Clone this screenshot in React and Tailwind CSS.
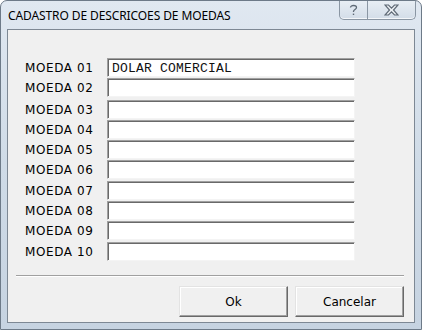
import React from "react";

const rows = [
  { n: "01", v: "DOLAR COMERCIAL", mt: "mt-[28px]" },
  { n: "02", v: "", mt: "mt-[1px]" },
  { n: "03", v: "", mt: "mt-[3px]" },
  { n: "04", v: "", mt: "mt-[1px]" },
  { n: "05", v: "", mt: "mt-[1px]" },
  { n: "06", v: "", mt: "mt-[1px]" },
  { n: "07", v: "", mt: "mt-[2px]" },
  { n: "08", v: "", mt: "mt-[1px]" },
  { n: "09", v: "", mt: "mt-[1px]" },
  { n: "10", v: "", mt: "mt-[2px]" },
];

function Field({ value }) {
  return (
    <div className="w-[248px] h-[19px] shrink-0 bg-white border border-t-[#a0a0a0] border-l-[#a0a0a0] border-b-[#f4f4f4] border-r-[#f4f4f4] shadow-[inset_1px_1px_0_#696969] flex items-center pl-[4px] pt-[1px] font-['Liberation_Mono',monospace] text-[13px] text-[#111] leading-none tracking-[0.2px]">
      {value}
    </div>
  );
}

function Button({ children }) {
  return (
    <button
      type="button"
      className="w-[109px] h-[31px] bg-[#f0f0f0] border border-t-[#e3e3e3] border-l-[#e3e3e3] border-b-[#696969] border-r-[#696969] shadow-[inset_-1px_-1px_0_#a0a0a0,inset_1px_1px_0_#ffffff] font-['DejaVu_Sans',sans-serif] text-[12px] text-black"
    >
      {children}
    </button>
  );
}

export default function App() {
  return (
    <div className="w-[422px] h-[330px] rounded-t-[7px] border border-[#6d7a88] bg-gradient-to-b from-[#e0e8f1] via-[#cfdbe7] to-[#c6d3e1] flex flex-col overflow-hidden">
      {/* Title bar */}
      <div className="h-[28px] flex items-start relative shrink-0">
        <span className="ml-[7px] mt-[6px] font-['Noto_Sans',sans-serif] text-[12px] text-black tracking-[-0.1px]">
          CADASTRO DE DESCRICOES DE MOEDAS
        </span>
        <div className="absolute right-[5px] top-[-1px] flex h-[20px] border border-t-0 border-[#8a96a3] rounded-b-[5px] bg-gradient-to-b from-[#e9eff5] to-[#d3dde8] shadow-[inset_0_-1px_0_#f4f7fa]">
          <div className="w-[28px] flex items-center justify-center border-r border-[#8a96a3]">
            <svg width="9" height="12" viewBox="0 0 9 12" fill="none" stroke="#5f6a76" strokeWidth="1.3">
              <path d="M1.5 3.5 C1.5 0.8 7.5 0.8 7.5 3.5 C7.5 5.5 4.5 5.5 4.5 7.5 V8" />
              <rect x="3.8" y="9.6" width="1.4" height="1.4" fill="#5f6a76" stroke="none" />
            </svg>
          </div>
          <div className="w-[47px] flex items-center justify-center">
            <svg width="15" height="12" viewBox="0 0 15 12" fill="#eef2f6" stroke="#5f6a76" strokeWidth="1.2">
              <path d="M1 1 H4.5 L7.5 4.2 L10.5 1 H14 L9.5 6 L14 11 H10.5 L7.5 7.8 L4.5 11 H1 L5.5 6 Z" />
            </svg>
          </div>
        </div>
      </div>

      {/* Client area */}
      <div className="mx-[6px] mb-[6px] flex-1 border border-[#7d8894] bg-[#f0f0f0] flex flex-col">
        <div className="flex flex-col">
          {rows.map((r) => (
            <div key={r.n} className={`flex items-center ${r.mt}`}>
              <span className="w-[99px] shrink-0 pl-[17px] font-['DejaVu_Sans',sans-serif] text-[12px] tracking-[0.6px] text-black leading-none">
                MOEDA {r.n}
              </span>
              <Field value={r.v} />
            </div>
          ))}
        </div>

        <div className="mt-[14px] ml-[8px] mr-[10px] h-[2px] border-t border-[#a0a0a0] border-b border-b-white" />

        <div className="mt-[9px] flex justify-end gap-[7px] pr-[10px]">
          <Button>Ok</Button>
          <Button>Cancelar</Button>
        </div>
      </div>
    </div>
  );
}
